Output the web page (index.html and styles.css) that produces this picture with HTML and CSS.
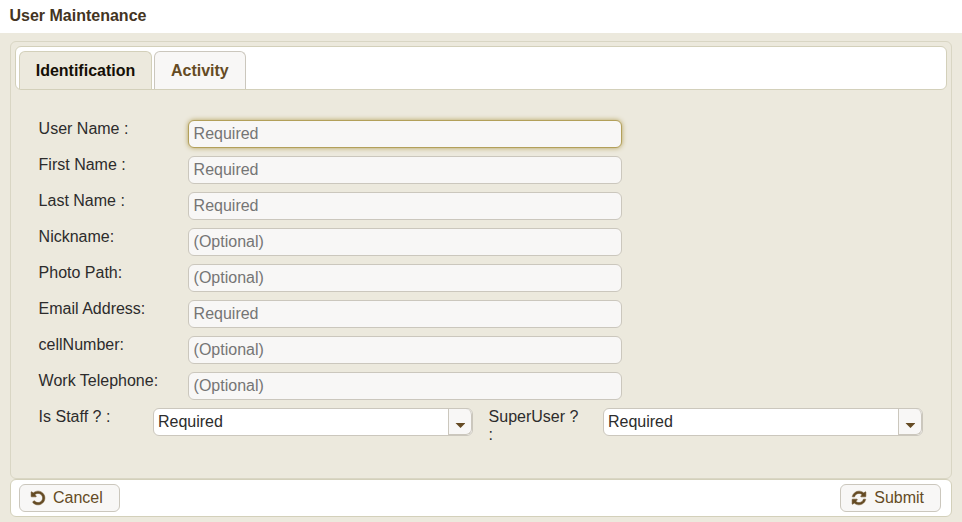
FILE: index.html
```
<!DOCTYPE html>
<html lang="en">
<head>
<meta charset="utf-8">
<title>User Maintenance</title>
<link rel="stylesheet" href="styles.css">
</head>
<body>
<header class="title">User Maintenance</header>
<main class="dialog">
  <section class="tabview">
    <nav class="tabs">
      <a class="tab active">Identification</a>
      <a class="tab">Activity</a>
    </nav>
    <form class="form">
      <div class="row"><label>User Name :</label><input class="field focused" placeholder="Required"></div>
      <div class="row"><label>First Name :</label><input class="field" placeholder="Required"></div>
      <div class="row"><label>Last Name :</label><input class="field" placeholder="Required"></div>
      <div class="row"><label>Nickname:</label><input class="field" placeholder="(Optional)"></div>
      <div class="row"><label>Photo Path:</label><input class="field" placeholder="(Optional)"></div>
      <div class="row"><label>Email Address:</label><input class="field" placeholder="Required"></div>
      <div class="row"><label>cellNumber:</label><input class="field" placeholder="(Optional)"></div>
      <div class="row"><label>Work Telephone:</label><input class="field" placeholder="(Optional)"></div>
      <div class="row selects">
        <label>Is Staff ? :</label>
        <div class="select"><span class="value">Required</span><span class="trigger"><i class="caret"></i></span></div>
        <label>SuperUser ? :</label>
        <div class="select"><span class="value">Required</span><span class="trigger"><i class="caret"></i></span></div>
      </div>
    </form>
  </section>
  <footer class="toolbar">
    <button class="button" type="button"><svg class="icon" viewBox="0 0 1792 1792"><path d="M1664 896q0 156-61 298t-164 245-245 164-298 61q-172 0-327-72.5t-264-204.5q-7-10-6.500-22.500t8.500-20.500l137-138q10-9 25-9 16 2 23 12 73 95 179 147t225 52q104 0 198.500-40.500t163.500-109.500 109.500-163.500 40.500-198.500-40.500-198.500-109.500-163.500-163.500-109.500-198.500-40.500q-98 0-188 35.500t-160 101.500l137 138q31 30 14 69-17 40-59 40h-448q-26 0-45-19t-19-45v-448q0-42 40-59 39-17 69 14l130 129q107-101 244.500-156.500t284.500-55.500q156 0 298 61t245 164 164 245 61 298z"/></svg>Cancel</button>
    <button class="button" type="button"><svg class="icon" viewBox="0 0 1792 1792"><path d="M1639 1056q0 5-1 7-64 268-268 434.500t-478 166.500q-146 0-282.500-55t-243.500-157l-129 129q-19 19-45 19t-45-19-19-45v-448q0-26 19-45t45-19h448q26 0 45 19t19 45-19 45l-137 137q71 66 161 102t187 36q134 0 250-65t186-179q11-17 53-117 8-23 30-23h192q13 0 22.500 9.500t9.500 22.500zm25-800v448q0 26-19 45t-45 19h-448q-26 0-45-19t-19-45 19-45l138-138q-148-137-349-137-134 0-250 65t-186 179q-11 17-53 117-8 23-30 23h-199q-13 0-22.500-9.500t-9.500-22.500v-7q65-268 270-434.500t480-166.500q146 0 284 55.500t245 156.500l130-129q19-19 45-19t45 19 19 45z"/></svg>Submit</button>
  </footer>
</main>
</body>
</html>
```
FILE: styles.css
```
* { box-sizing: border-box; }
body {
  margin: 0;
  height: 522px;
  overflow: hidden;
  background: #ece9dd;
  color: #2c2c2c;
  font: 16px/18px "Liberation Sans", Arial, sans-serif;
}
.title {
  height: 33px;
  padding: 7px 9.5px;
  background: #fff;
  color: #433422;
  font-weight: bold;
}
.dialog { padding: 8px 10px 0; }
.tabview {
  height: 438px;
  padding: 4px;
  border: 1px solid #d9d6c4;
  border-radius: 6px;
}
.tabs {
  display: flex;
  gap: 2px;
  height: 44px;
  padding: 4px 3px 0;
  background: #fff;
  border: 1px solid #d3d0ba;
  border-radius: 6px;
}
.tab {
  height: 38px;
  padding: 10px 16px;
  background: #f8f7f6;
  border: 1px solid #cbc7bd;
  border-bottom: 0;
  border-radius: 6px 6px 0 0;
  color: #654b24;
  font-weight: bold;
}
.tab.active {
  padding: 10px 15.7px;
  background: #ece9dd;
  border-color: #d3d0ba;
  color: #140f06;
}
.form { padding: 30px 0 0 23.6px; }
.row { display: flex; height: 36px; }
.row label { width: 149.4px; }
.field {
  width: 434px;
  height: 28px;
  padding: 4px 4.6px;
  background: #f8f7f6;
  border: 1px solid #cbc7bd;
  border-radius: 6px;
  outline: 0;
  color: #2c2c2c;
  font: inherit;
}
.field::placeholder { color: #757575; }
.field.focused {
  border-color: #b3a05a;
  box-shadow: 0 0 5px #b3a05a;
}
.row.selects label { width: 114.4px; }
.row.selects .select + label { width: 114.4px; margin-left: 15.6px; padding-right: 16px; }
.select {
  display: flex;
  width: 320px;
  height: 28px;
  background: #fff;
  border: 1px solid #cbc7bd;
  border-radius: 6px;
}
.value { flex: 1; padding: 4px; }
.trigger {
  display: flex;
  justify-content: center;
  width: 24px;
  padding: 14px 0 0 1px;
  background: #f8f7f6;
  border: 1px solid #cbc7bd;
  border-width: 0 1px 1px;
  border-radius: 0 6px 6px 0;
}
.caret {
  width: 10px;
  height: 5px;
  background: #654b24;
  clip-path: polygon(0 0, 100% 0, 50% 100%);
}
.toolbar {
  display: flex;
  justify-content: space-between;
  height: 38px;
  padding: 4px 10px 4px 8px;
  background: #fff;
  border: 1px solid #d3d0ba;
  border-radius: 6px;
}
.button {
  display: flex;
  align-items: center;
  gap: 7px;
  height: 28px;
  padding: 0 16px 1px 10px;
  background: #f8f7f6;
  border: 1px solid #cbc7bd;
  border-radius: 6px;
  color: #654b24;
  font: inherit;
}
.icon { width: 16px; height: 16px; fill: #654b24; stroke: #654b24; stroke-width: 60; }
```
